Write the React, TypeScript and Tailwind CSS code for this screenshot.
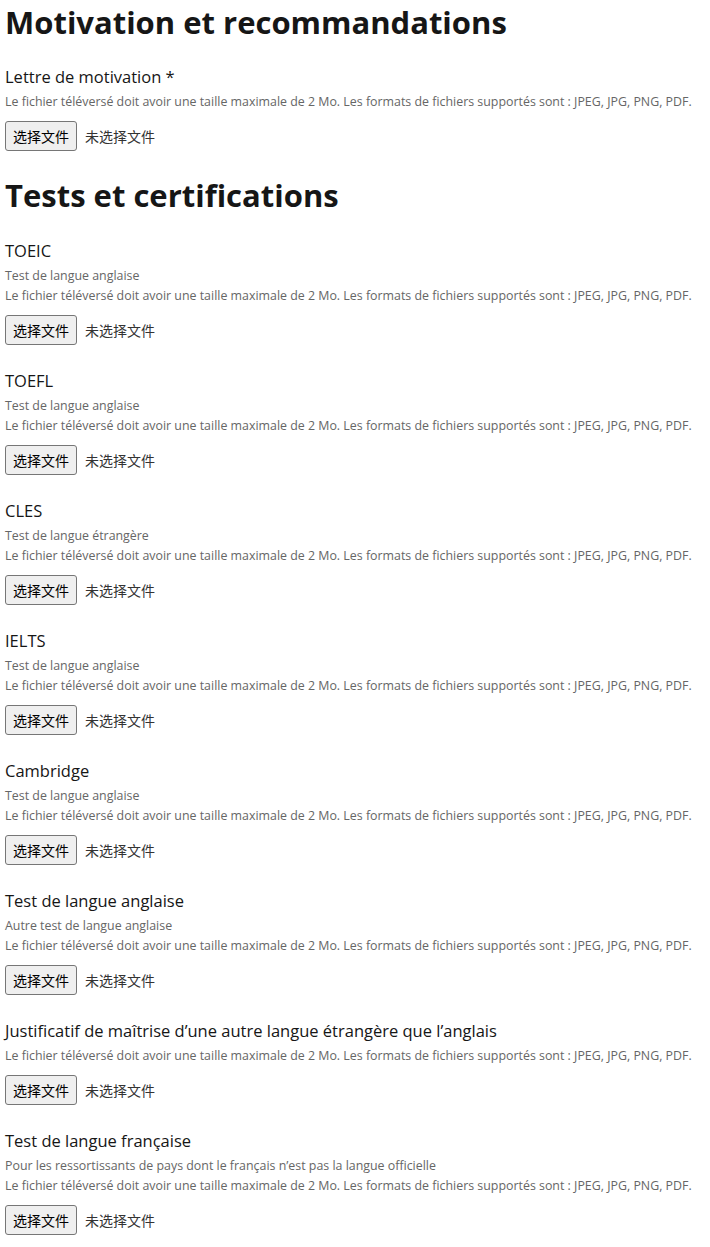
import React from "react";

type Field = {
  label: string;
  hints: string[];
};

const SIZE_HINT =
  "Le fichier téléversé doit avoir une taille maximale de 2 Mo. Les formats de fichiers supportés sont : JPEG, JPG, PNG, PDF.";

const tests: Field[] = [
  { label: "TOEIC", hints: ["Test de langue anglaise", SIZE_HINT] },
  { label: "TOEFL", hints: ["Test de langue anglaise", SIZE_HINT] },
  { label: "CLES", hints: ["Test de langue étrangère", SIZE_HINT] },
  { label: "IELTS", hints: ["Test de langue anglaise", SIZE_HINT] },
  { label: "Cambridge", hints: ["Test de langue anglaise", SIZE_HINT] },
  { label: "Test de langue anglaise", hints: ["Autre test de langue anglaise", SIZE_HINT] },
  {
    label: "Justificatif de maîtrise d’une autre langue étrangère que l’anglais",
    hints: [SIZE_HINT],
  },
  {
    label: "Test de langue française",
    hints: ["Pour les ressortissants de pays dont le français n’est pas la langue officielle", SIZE_HINT],
  },
];

const FileUpload = ({ label, hints }: Field) => {
  return (
    <div className="flex flex-col">
      <label className="text-[16.5px] leading-[24px] text-[#161616] font-['Open_Sans','Liberation_Sans',sans-serif]">
        {label}
      </label>
      <div className="mt-[3px] flex flex-col">
        {hints.map((h, i) => (
          <p
            key={i}
            className="text-[12.4px] leading-[20px] text-[#666666] font-['Open_Sans','Liberation_Sans',sans-serif]"
          >
            {h}
          </p>
        ))}
      </div>
      <div className="mt-[9px] flex items-center gap-2 font-['Noto_Sans_CJK_SC',sans-serif] text-[14px]">
        <button className="h-[30px] w-[72px] rounded-[3px] border border-[#767676] bg-[#efefef] text-[#000]">
          选择文件
        </button>
        <span className="text-[#333]">未选择文件</span>
      </div>
    </div>
  );
};

const App = () => {
  return (
    <div className="bg-white pl-[5px] pt-[2px] pb-[11px] text-[#161616]">
      <h2 className="text-[31px] leading-[40px] font-bold font-['Open_Sans','Liberation_Sans',sans-serif]">
        Motivation et recommandations
      </h2>
      <div className="mt-[23px]">
        <FileUpload label="Lettre de motivation *" hints={[SIZE_HINT]} />
      </div>

      <h2 className="mt-[24px] text-[31px] leading-[40px] font-bold font-['Open_Sans','Liberation_Sans',sans-serif]">
        Tests et certifications
      </h2>
      <div className="mt-[24px] flex flex-col gap-[24px]">
        {tests.map((t) => (
          <FileUpload key={t.label} label={t.label} hints={t.hints} />
        ))}
      </div>
    </div>
  );
};

export default App;
